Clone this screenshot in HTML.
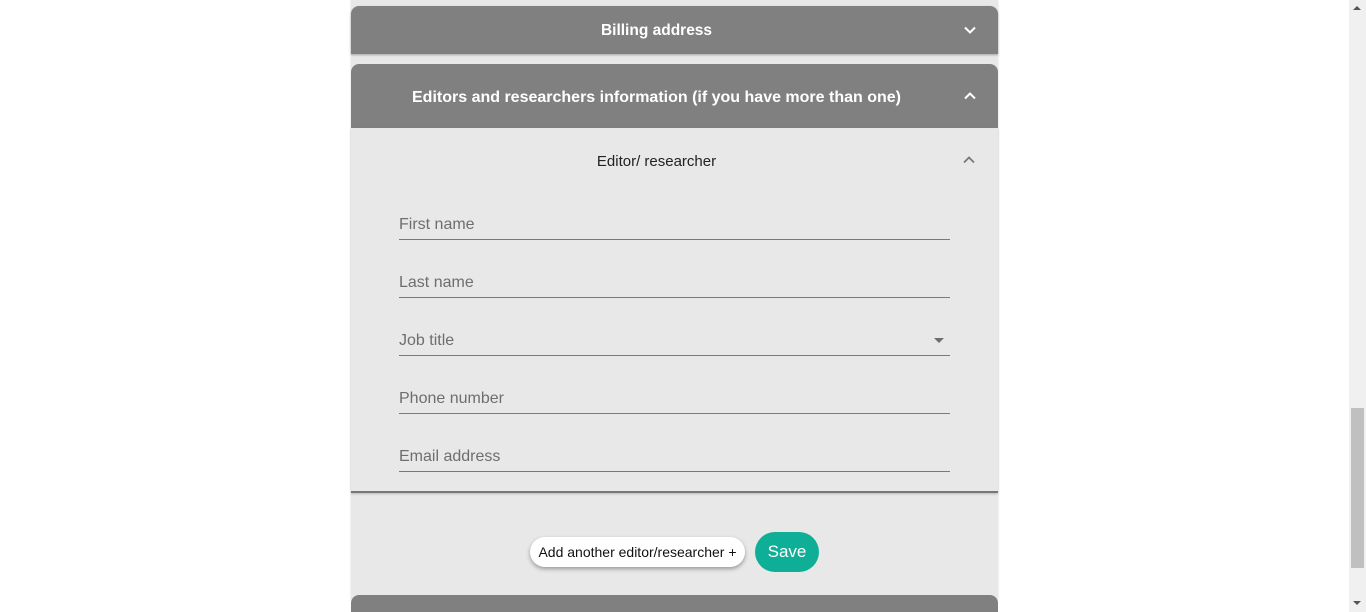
<!DOCTYPE html>
<html style="overflow:hidden;height:612px"><head><meta charset="utf-8"><style>
*{box-sizing:border-box;margin:0;padding:0}
body{width:1366px;height:612px;background:#fff;position:relative;overflow:hidden;font-family:"Liberation Sans",sans-serif}
.a{position:absolute}
.panel{left:351px;width:647px;background:#e8e8e8}
.hdr{left:351px;width:647px;background:#808080;color:#fff;font-weight:bold;font-size:15.5px;border-radius:8px 8px 0 0}
.hdr .t{position:absolute;left:0;width:611px;text-align:center}
.chev{position:absolute;right:22px;width:12px;height:8px}
.field{left:399px;width:551px;height:24px;border-bottom:1px solid #7a7a7a;color:#6e6e6e;font-size:16px}
</style></head><body>
<div class="a panel" style="top:0;height:600px;box-shadow:0 0 2px rgba(0,0,0,.15)"></div>
<div class="a hdr" style="top:6px;height:48px;line-height:50px;box-shadow:0 1px 2px rgba(0,0,0,.3)"><span class="t">Billing address</span>
<svg class="chev" style="top:20px" viewBox="0 0 12 8"><path d="M1 1.5l5 5 5-5" stroke="#fff" stroke-width="2" fill="none"/></svg></div>
<div class="a hdr" style="top:64px;height:64px;line-height:67px;font-size:16px"><span class="t">Editors and researchers information (if you have more than one)</span>
<svg class="chev" style="top:28px" viewBox="0 0 12 8"><path d="M1 6.5l5-5 5 5" stroke="#fff" stroke-width="2" fill="none"/></svg></div>
<div class="a" style="left:351px;top:128px;width:647px;height:365px;background:#e8e8e8;border-bottom:2px solid #777;box-shadow:0 1px 2px rgba(0,0,0,.2)"></div>
<div class="a" style="left:351px;top:153px;width:611px;text-align:center;font-size:15px;color:#222">Editor/ researcher</div>
<svg class="a" style="left:963px;top:156px;width:12px;height:8px" viewBox="0 0 12 8"><path d="M1 6.5l5-5 5 5" stroke="#777" stroke-width="1.8" fill="none"/></svg>
<div class="a field" style="top:216px">First name</div>
<div class="a field" style="top:274px">Last name</div>
<div class="a field" style="top:332px">Job title<span style="position:absolute;right:6px;top:6px;width:0;height:0;border-left:5px solid transparent;border-right:5px solid transparent;border-top:5px solid #6e6e6e"></span></div>
<div class="a field" style="top:390px">Phone number</div>
<div class="a field" style="top:448px">Email address</div>
<div class="a" style="left:530px;top:537px;width:215px;height:30px;background:#fff;border-radius:15px;box-shadow:0 2px 4px rgba(0,0,0,.35);font-size:14px;line-height:30px;text-align:center;color:#111">Add another editor/researcher +</div>
<div class="a" style="left:755px;top:532px;width:64px;height:40px;background:#0fae96;border-radius:20px;color:#fff;font-size:17px;line-height:40px;text-align:center">Save</div>
<div class="a hdr" style="top:595px;height:17px"></div>
<div class="a" style="left:1349px;top:0;width:17px;height:612px;background:#f0f0f0"></div>
<div class="a" style="left:1351px;top:408px;width:13px;height:160px;background:#c0c0c0"></div>
<div class="a" style="left:1353px;top:6px;width:0;height:0;border-left:4px solid transparent;border-right:4px solid transparent;border-bottom:4px solid #555"></div>
<div class="a" style="left:1353px;top:601px;width:0;height:0;border-left:4px solid transparent;border-right:4px solid transparent;border-top:4px solid #555"></div>
</body></html>
